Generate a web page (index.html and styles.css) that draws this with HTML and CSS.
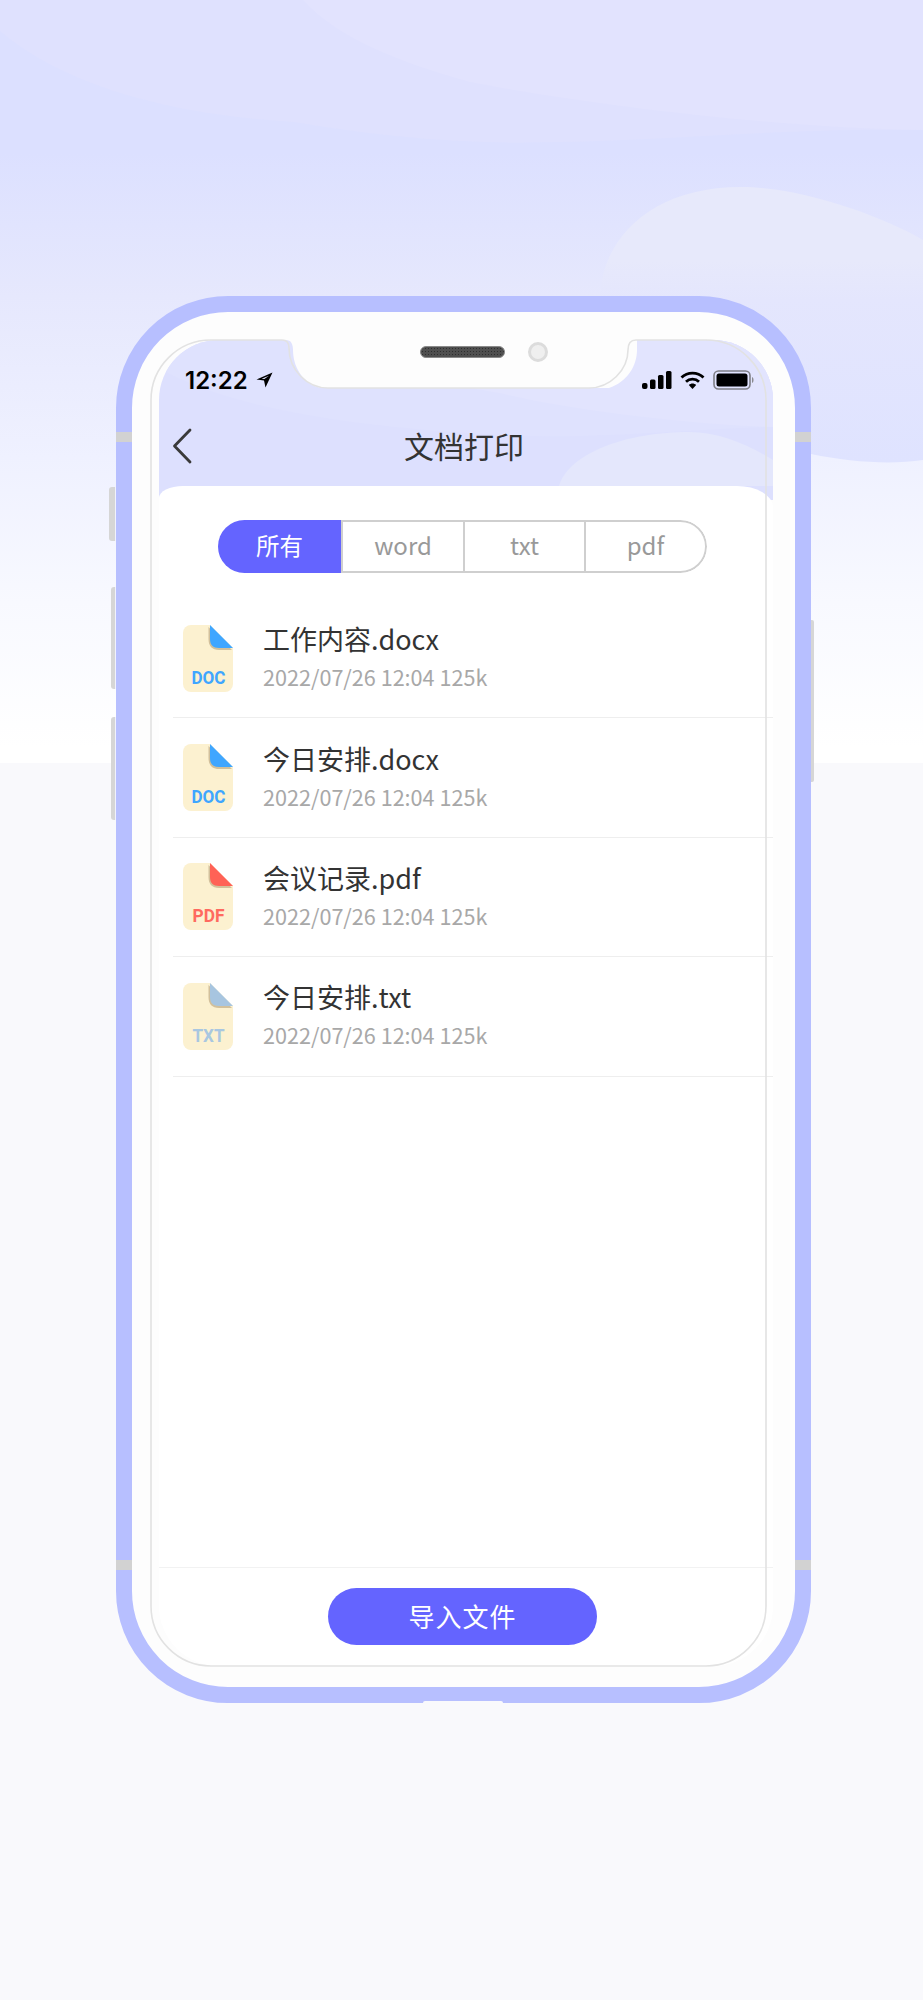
FILE: index.html
```html
<!DOCTYPE html>
<html lang="zh-CN">
<head>
    <meta charset="UTF-8">
    <meta name="viewport" content="width=device-width, initial-scale=1.0">
    <title>文档打印</title>
    <link rel="stylesheet" href="styles.css">
</head>
<body>
    <!-- page backdrop, sits behind the phone -->
    <svg class="backdrop" viewBox="0 0 923 763" aria-hidden="true">
        <defs>
            <linearGradient id="bgFade" x1="0" y1="0" x2="0" y2="1">
                <stop offset="0" stop-color="#dce0ff"/>
                <stop offset="0.2" stop-color="#dce0ff"/>
                <stop offset="0.39" stop-color="#e6e8fd"/>
                <stop offset="0.6" stop-color="#eff1ff"/>
                <stop offset="0.79" stop-color="#f8f9ff"/>
                <stop offset="0.98" stop-color="#ffffff"/>
            </linearGradient>
            <linearGradient id="bgRight" x1="0" y1="0" x2="0" y2="1">
                <stop offset="0" stop-color="#e4e6fd"/>
                <stop offset="1" stop-color="#dfe3ff"/>
            </linearGradient>
            <linearGradient id="blobFade" x1="0" y1="0" x2="0" y2="1">
                <stop offset="0" stop-color="#e7e9fb"/>
                <stop offset="0.65" stop-color="#e7e9fb"/>
                <stop offset="1" stop-color="#e4e6fd"/>
            </linearGradient>
        </defs>
        <rect width="923" height="763" fill="url(#bgFade)"/>
        <path d="M0 31 C 70 90 180 115 294 122 C 400 140 480 144 560 142 C 680 140 780 128 923 130 V0 H0 Z" fill="#dfe1fe"/>
        <path d="M303 0 C 340 40 400 62 470 82 C 590 105 780 128 923 130 V0 Z" fill="#e2e3fe"/>
        <path d="M700 298 H923 V460 C 890 465 850 462 811 454 H700 Z" fill="url(#bgRight)"/>
        <path d="M600 300 C 600 240 650 187 741 187 C 800 187 880 215 923 240 V300 Z" fill="url(#blobFade)"/>
    </svg>

    <div class="phone">
        <span class="band band-left band-top"></span>
        <span class="band band-right band-top"></span>
        <span class="band band-left band-bottom"></span>
        <span class="band band-right band-bottom"></span>
        <span class="side-btn mute"></span>
        <span class="side-btn vol-up"></span>
        <span class="side-btn vol-down"></span>
        <span class="side-btn power"></span>
        <span class="chin"></span>

        <div class="screen">
            <svg class="screen-bg" viewBox="0 0 614 160" aria-hidden="true">
                <rect width="614" height="160" fill="#dde0fe"/>
                <path d="M0 28 C 60 62 160 85 340 95 C 440 100 540 88 614 87 V0 H0 Z" fill="#dfe2fe"/>
                <path d="M190 0 C 230 30 280 44 341 53 C 400 68 520 84 614 87 V0 Z" fill="#e2e4fe"/>
                <path d="M400 146 C 410 112 470 92 530 92 C 560 92 590 105 614 120 V146 Z" fill="#e4e7fc"/>
            </svg>

            <div class="notch">
                <svg class="notch-shape" viewBox="0 0 344 48" aria-hidden="true">
                    <path d="M0 0 H344 V10 C 344 26 334 42 316 48 H32 C 14 48 0 30 0 10 C 0 4 -2 0 -7 0 Z" fill="#fdfdfd"/>
                </svg>
                <span class="speaker"></span>
                <span class="camera"></span>
            </div>

            <div class="status-bar">
                <div class="status-time">
                    <span>12:22</span>
                    <svg width="17" height="16" viewBox="0 0 17 16"><path d="M16.5 0.5 L0.5 7.5 L8 8.5 L9.5 15.5 Z M13 3.8 L8.4 7 L5.6 6.7 Z" fill="#000" fill-rule="evenodd"/></svg>
                </div>
                <div class="status-icons">
                    <svg width="30" height="18" viewBox="0 0 30 18"><rect x="0" y="12" width="5.5" height="6" rx="2" fill="#000"/><rect x="8" y="8.5" width="5.5" height="9.5" rx="1.5" fill="#000"/><rect x="16" y="4" width="5.5" height="14" rx="1.5" fill="#000"/><rect x="24" y="0" width="5.5" height="18" rx="1.5" fill="#000"/></svg>
                    <svg width="25" height="18" viewBox="0 0 25 18"><path d="M1.5 6.5 C 7.5 0.7 17.5 0.7 23.5 6.5" fill="none" stroke="#000" stroke-width="2.8"/><path d="M6 10.7 C 9.5 7.3 15.5 7.3 19 10.7" fill="none" stroke="#000" stroke-width="2.8"/><path d="M8.8 14 C 11 12 14 12 16.2 14 L12.5 18 Z" fill="#000"/></svg>
                    <svg width="44" height="20" viewBox="0 0 44 20"><rect x="1" y="1" width="36" height="18" rx="4.5" fill="none" stroke="#7f7f86" stroke-width="1.6"/><rect x="3.5" y="3.5" width="31" height="13" rx="2.5" fill="#000"/><path d="M39 7 C 41 7.5 41 12.5 39 13 Z" fill="#8a8a90"/></svg>
                </div>
            </div>

            <div class="nav">
                <svg class="back" width="20" height="36" viewBox="0 0 20 36"><path d="M18 2 L2.5 18 L18 34" fill="none" stroke="#3a3a3a" stroke-width="2.8" stroke-linecap="round" stroke-linejoin="round"/></svg>
                <h1 class="nav-title">文档打印</h1>
            </div>

            <div class="panel">
                <div class="tabs">
                    <div class="tab active">所有</div>
                    <div class="tab">word</div>
                    <div class="tab">txt</div>
                    <div class="tab">pdf</div>
                </div>

                <ul class="file-list">
                    <li class="file">
                        <svg class="file-icon" viewBox="0 0 50 67">
                            <path d="M8 0 H27 L50 23 V59 A8 8 0 0 1 42 67 H8 A8 8 0 0 1 0 59 V8 A8 8 0 0 1 8 0 Z" fill="#fcf1d0"/>
                            <path d="M25.5 2 V14 C 25.5 21 29 25 36 25 H49 L46 22 Z" fill="#d2c09b"/>
                            <path d="M27 0 L50 23 H36 C 30 23 27 20 27 14 Z" fill="#3fa6ff"/>
                            <text class="file-ext" x="8.5" y="59" textLength="34" lengthAdjust="spacingAndGlyphs" fill="#3fa6ff">DOC</text>
                        </svg>
                        <div class="file-info">
                            <div class="file-name">工作内容.docx</div>
                            <div class="file-meta">2022/07/26 12:04 125k</div>
                        </div>
                    </li>
                    <li class="file">
                        <svg class="file-icon" viewBox="0 0 50 67">
                            <path d="M8 0 H27 L50 23 V59 A8 8 0 0 1 42 67 H8 A8 8 0 0 1 0 59 V8 A8 8 0 0 1 8 0 Z" fill="#fcf1d0"/>
                            <path d="M25.5 2 V14 C 25.5 21 29 25 36 25 H49 L46 22 Z" fill="#d2c09b"/>
                            <path d="M27 0 L50 23 H36 C 30 23 27 20 27 14 Z" fill="#3fa6ff"/>
                            <text class="file-ext" x="8.5" y="59" textLength="34" lengthAdjust="spacingAndGlyphs" fill="#3fa6ff">DOC</text>
                        </svg>
                        <div class="file-info">
                            <div class="file-name">今日安排.docx</div>
                            <div class="file-meta">2022/07/26 12:04 125k</div>
                        </div>
                    </li>
                    <li class="file">
                        <svg class="file-icon" viewBox="0 0 50 67">
                            <path d="M8 0 H27 L50 23 V59 A8 8 0 0 1 42 67 H8 A8 8 0 0 1 0 59 V8 A8 8 0 0 1 8 0 Z" fill="#fcf1d0"/>
                            <path d="M25.5 2 V14 C 25.5 21 29 25 36 25 H49 L46 22 Z" fill="#d2c09b"/>
                            <path d="M27 0 L50 23 H36 C 30 23 27 20 27 14 Z" fill="#ff6256"/>
                            <text class="file-ext" x="9.5" y="59" textLength="32" lengthAdjust="spacingAndGlyphs" fill="#ff6a5f">PDF</text>
                        </svg>
                        <div class="file-info">
                            <div class="file-name">会议记录.pdf</div>
                            <div class="file-meta">2022/07/26 12:04 125k</div>
                        </div>
                    </li>
                    <li class="file">
                        <svg class="file-icon" viewBox="0 0 50 67">
                            <path d="M8 0 H27 L50 23 V59 A8 8 0 0 1 42 67 H8 A8 8 0 0 1 0 59 V8 A8 8 0 0 1 8 0 Z" fill="#fcf1d0"/>
                            <path d="M25.5 2 V14 C 25.5 21 29 25 36 25 H49 L46 22 Z" fill="#d2c09b"/>
                            <path d="M27 0 L50 23 H36 C 30 23 27 20 27 14 Z" fill="#a7c5e0"/>
                            <text class="file-ext" x="9.5" y="59" textLength="32" lengthAdjust="spacingAndGlyphs" fill="#a9c7e0">TXT</text>
                        </svg>
                        <div class="file-info">
                            <div class="file-name">今日安排.txt</div>
                            <div class="file-meta">2022/07/26 12:04 125k</div>
                        </div>
                    </li>
                </ul>

                <div class="footer">
                    <button class="import-btn">导入文件</button>
                </div>
            </div>
        </div>

        <!-- thin outline of the screen, drawn a little off from the fill like in the mockup -->
        <svg class="screen-outline" viewBox="0 0 663 1375" aria-hidden="true">
            <path d="M79 28 H150 C 155 28 157 31 157 36 C 157 58 175 76 196 76 H457 C 478 76 496 58 496 38 C 496 31 499 28 504 28 H574 A60 60 0 0 1 634 88 V1294 A60 60 0 0 1 574 1354 H79 A60 60 0 0 1 19 1294 V88 A60 60 0 0 1 79 28 Z" fill="none" stroke="#e2e2e2" stroke-width="1.6"/>
        </svg>
    </div>
</body>
</html>
```

FILE: styles.css
```css
* {
    box-sizing: border-box;
}

body {
    margin: 0;
    height: 2000px;
    overflow: hidden;
    background: #f9f9fc;
    font-family: "Noto Sans CJK SC", "Noto Sans", sans-serif;
    padding: 296px 0 0 116px;
    position: relative;
}

.backdrop {
    position: absolute;
    top: 0;
    left: 0;
    width: 923px;
    height: 763px;
}

.phone {
    position: relative;
    width: 695px;
    height: 1407px;
    padding: 28px 0 0 27px;
    background: #fdfdfd;
    border: 16px solid #b7bfff;
    border-radius: 112px;
}

.band {
    position: absolute;
    width: 16px;
    height: 10px;
    background: #d2d2d2;
}

.band-left { left: -16px; }
.band-right { right: -16px; }
.band-top { top: 120px; }
.band-bottom { top: 1248px; }

.side-btn {
    position: absolute;
    background: #d6d6d6;
    border-right: 1px solid #f1f2fd;
    border-radius: 3px 0 0 3px;
}

.mute { left: -23px; top: 175px; width: 7px; height: 54px; }
.vol-up { left: -21px; top: 275px; width: 5px; height: 102px; }
.vol-down { left: -21px; top: 405px; width: 5px; height: 103px; }
.power { right: -19px; top: 308px; width: 3px; height: 162px; border-right: 0; border-radius: 0 2px 2px 0; }

.chin {
    position: absolute;
    left: 291px;
    bottom: -16px;
    width: 80px;
    height: 2px;
    background: #f9f9fc;
    border-radius: 2px 2px 0 0;
}

.screen {
    position: relative;
    display: flex;
    flex-direction: column;
    width: 614px;
    height: 1326px;
    overflow: hidden;
    border-radius: 60px;
}

.screen-bg {
    position: absolute;
    top: 0;
    left: 0;
    width: 614px;
    height: 160px;
}

.screen-outline {
    position: absolute;
    top: 0;
    left: 0;
    width: 663px;
    height: 1375px;
    pointer-events: none;
}

.notch {
    position: absolute;
    top: 0;
    left: 134px;
    width: 344px;
    height: 48px;
    display: flex;
    align-items: flex-start;
    gap: 23px;
    padding: 6px 0 0 127px;
}

.notch-shape {
    position: absolute;
    top: 0;
    left: 0;
    width: 344px;
    height: 48px;
    overflow: visible;
}

.speaker {
    position: relative;
    width: 85px;
    height: 12px;
    border-radius: 6px;
    background-color: #4f4f4f;
    background-image: radial-gradient(#2f2f2f 1px, transparent 1px);
    background-size: 3px 3px;
    border: 1px solid #8a8a8a;
}

.camera {
    position: relative;
    width: 20px;
    height: 20px;
    margin-top: -4px;
    border-radius: 50%;
    background: #efefef;
    border: 3px solid #dcdcdc;
}

.status-bar {
    position: relative;
    display: flex;
    justify-content: space-between;
    align-items: center;
    height: 60px;
    padding: 20px 16px 0 26px;
}

.status-time {
    display: flex;
    align-items: center;
    gap: 8px;
    font-family: Inter, sans-serif;
    font-weight: 600;
    font-size: 24px;
    color: #000;
}

.status-icons {
    display: flex;
    align-items: center;
    gap: 8px;
}

.nav {
    position: relative;
    display: flex;
    justify-content: center;
    align-items: center;
    height: 86px;
    padding: 0 4px 0 0;
}

.back {
    position: absolute;
    left: 13px;
    top: 28px;
}

.nav-title {
    margin: 0 0 -4px;
    font-size: 30px;
    font-weight: 400;
    color: #333;
}

.panel {
    position: relative;
    flex: 1;
    display: flex;
    flex-direction: column;
    min-height: 0;
    background: #fff;
    border-radius: 24px 36px 0 0 / 12px 21px 0 0;
}

.tabs {
    display: flex;
    width: 489px;
    height: 53px;
    margin: 34px 0 0 59px;
    border-radius: 27px;
    overflow: hidden;
}

.tab {
    flex: 0 0 122px;
    display: flex;
    justify-content: center;
    align-items: center;
    padding-bottom: 4px;
    font-size: 24px;
    color: #999;
    border: 2px solid #cfcfcf;
    border-right: 0;
}

.tab:nth-child(3) {
    flex-basis: 121px;
}

.tab:last-child {
    flex-basis: 123px;
    border-right: 2px solid #cfcfcf;
    border-radius: 0 27px 27px 0;
}

.tab.active {
    flex-basis: 123px;
    border: 0;
    background: #6464ff;
    color: #fff;
    font-size: 23.5px;
}

.file-list {
    flex: 1;
    margin: 26px 0 0 14px;
    padding: 0;
    list-style: none;
}

.file {
    display: flex;
    align-items: center;
    gap: 30px;
    height: 119.4px;
    padding-left: 10px;
    border-bottom: 1.5px solid #eeeeee;
}

.file-icon {
    width: 50px;
    height: 67px;
    flex-shrink: 0;
}

.file-ext {
    font-family: Roboto, sans-serif;
    font-weight: 700;
    font-size: 19px;
}

.file-info {
    padding-bottom: 3px;
}

.file-name {
    font-size: 27px;
    line-height: 36px;
    color: #333;
}

.file-meta {
    margin-top: 5px;
    font-size: 21.6px;
    line-height: 30px;
    color: #a8a8a8;
}

.footer {
    display: flex;
    justify-content: center;
    height: 99px;
    padding: 20px 7px 0 0;
    border-top: 1.5px solid #f2f2f2;
}

.import-btn {
    width: 269px;
    height: 57px;
    padding-bottom: 3px;
    border: none;
    border-radius: 29px;
    background: #6464ff;
    color: #fff;
    font-family: inherit;
    font-size: 26px;
    letter-spacing: 1px;
}
```
